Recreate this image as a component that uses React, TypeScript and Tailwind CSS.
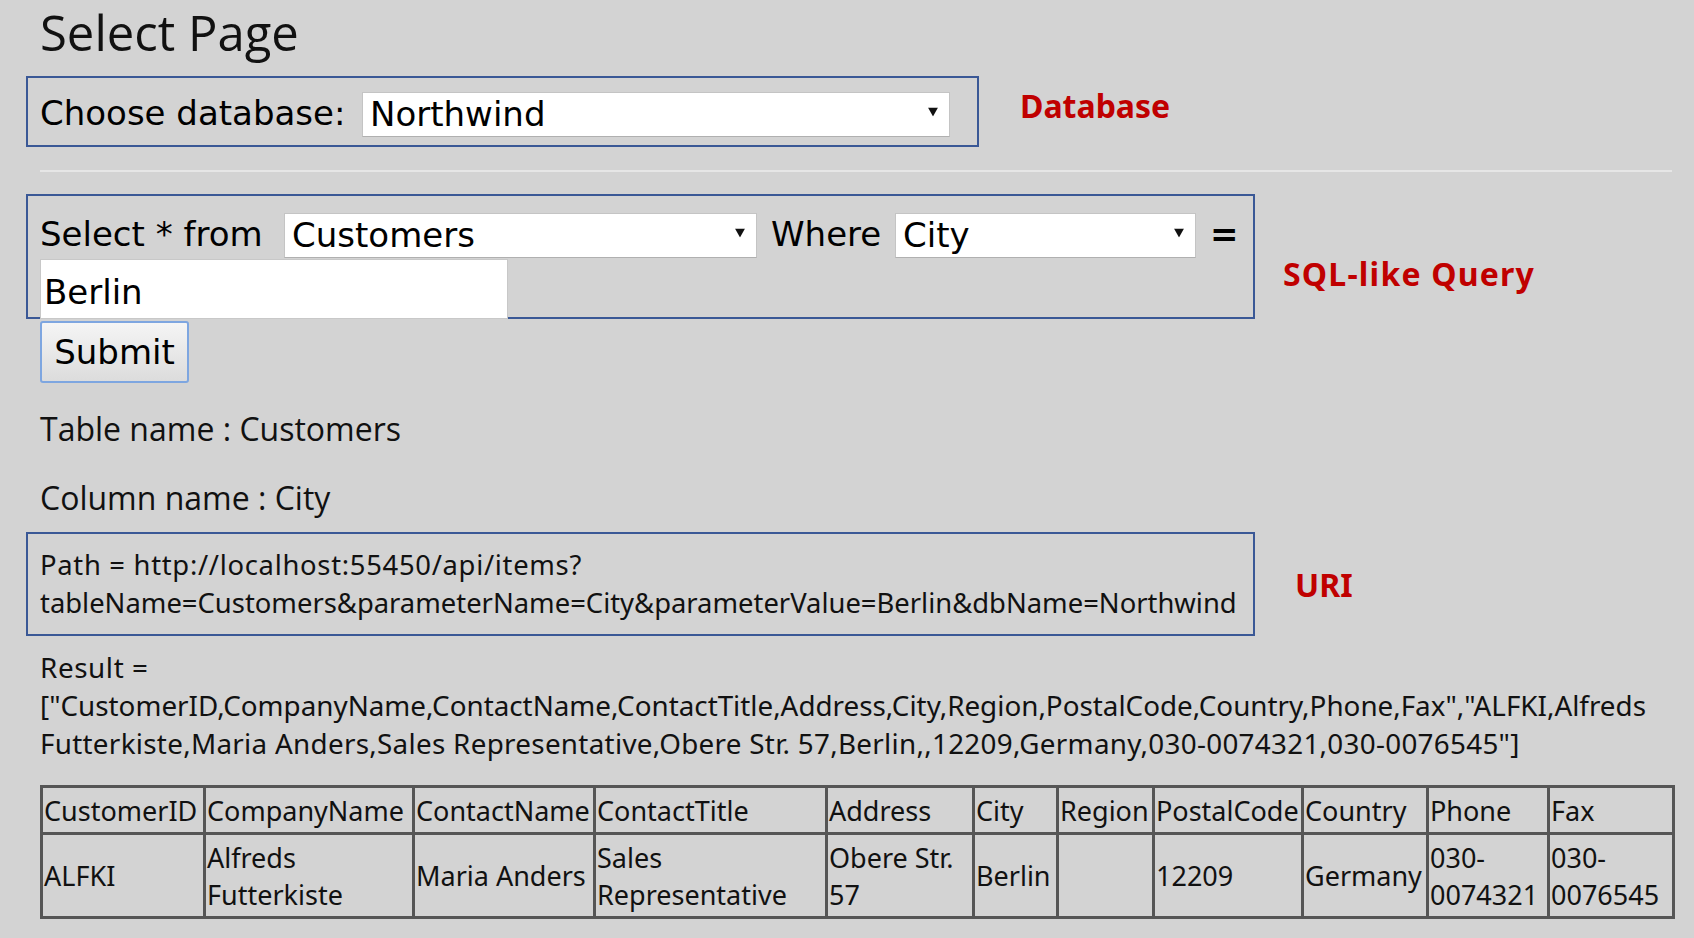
import React from "react";

const BOX = "border-2 border-[#3a5896]";
const RED = "font-['Noto_Sans',sans-serif] font-bold leading-[40px] text-[#c00000] whitespace-nowrap";

function Arrow() {
  return (
    <svg
      width="10"
      height="9"
      viewBox="0 0 10 9"
      className="pointer-events-none absolute right-[12px] top-1/2 -translate-y-1/2"
    >
      <path d="M0 0H10L5 9Z" fill="#111" />
    </svg>
  );
}

function Dropdown({ value, width }: { value: string; width: string }) {
  return (
    <div className={`relative h-[45px] shrink-0 ${width}`}>
      <select
        defaultValue={value}
        className="h-full w-full appearance-none rounded-none border border-[#c4c4c4] border-b-[#b0b0b0] bg-white pl-[7px] pr-[30px] font-['DejaVu_Sans',Verdana,sans-serif] text-[34px] leading-[43px] text-black outline-none"
      >
        <option>{value}</option>
      </select>
      <Arrow />
    </div>
  );
}

const cols = [163, 209, 181, 232, 147, 84, 96, 149, 125, 121, 125];
const header = [
  "CustomerID",
  "CompanyName",
  "ContactName",
  "ContactTitle",
  "Address",
  "City",
  "Region",
  "PostalCode",
  "Country",
  "Phone",
  "Fax",
];
const row = [
  "ALFKI",
  "Alfreds Futterkiste",
  "Maria Anders",
  "Sales Representative",
  "Obere Str. 57",
  "Berlin",
  "",
  "12209",
  "Germany",
  "030-0074321",
  "030-0076545",
];

export default function App() {
  return (
    <div className="min-h-[938px] w-full overflow-hidden bg-[#d3d3d3] text-black">
      <div className="pl-[40px] pr-[22px]">
        <h1 className="pt-[8px] font-['Open_Sans',sans-serif] text-[49px] font-normal leading-[49px] text-[#111]">
          Select Page
        </h1>

        {/* Database */}
        <div className="-ml-[14px] mt-[19px] flex items-start">
          <div
            className={`${BOX} flex h-[71px] w-[953px] shrink-0 items-center pl-[12px] font-['DejaVu_Sans',Verdana,sans-serif] text-[34px]`}
          >
            <span className="w-[322px] shrink-0 translate-y-[2px] whitespace-nowrap">Choose database:</span>
            <Dropdown value="Northwind" width="w-[588px]" />
          </div>
          <span className={`${RED} ml-[41px] mt-[10px] text-[32px]`}>Database</span>
        </div>

        <div className="mt-[23px] h-[2px] bg-[#e6e6e6]" />

        {/* Query */}
        <div className="-ml-[14px] mt-[22px] flex items-start">
          <div
            className={`${BOX} h-[125px] w-[1229px] shrink-0 pl-[12px] pt-[14px] font-['DejaVu_Sans',Verdana,sans-serif] text-[34px]`}
          >
            <div className="flex h-[45px] items-center whitespace-nowrap">
              <span className="w-[244px] shrink-0 translate-y-[2px]">Select * from</span>
              <Dropdown value="Customers" width="w-[473px]" />
              <span className="ml-[14px] w-[124px] shrink-0 translate-y-[2px]">Where</span>
              <Dropdown value="City" width="w-[301px]" />
              <span className="ml-[14px] translate-y-[2px] font-bold">=</span>
            </div>
            <input
              readOnly
              value="Berlin"
              className="mt-[4px] block h-[60px] w-[468px] border border-[#c8c8c8] bg-white pl-[3px] pt-[6px] font-['DejaVu_Sans',Verdana,sans-serif] text-[34px] text-black outline-none"
            />
          </div>
          <span className={`${RED} ml-[28px] mt-[60px] text-[32px] tracking-[1.2px]`}>SQL-like Query</span>
        </div>

        <button className="mt-[2px] block h-[62px] w-[149px] rounded-[3px] border-2 border-[#7ea6e0] bg-gradient-to-b from-[#f5f5f5] to-[#dcdcdc] font-['DejaVu_Sans',Verdana,sans-serif] text-[34px] leading-[40px] text-black">
          Submit
        </button>

        <p className="mt-[24px] h-[44px] font-['Open_Sans',sans-serif] text-[32px] leading-[44px] text-[#111]">
          Table name : Customers
        </p>
        <p className="mt-[25px] h-[44px] font-['Open_Sans',sans-serif] text-[32px] leading-[44px] text-[#111]">
          Column name : City
        </p>

        {/* URI */}
        <div className="-ml-[14px] mt-[12px] flex items-start">
          <div
            className={`${BOX} h-[104px] w-[1229px] shrink-0 whitespace-nowrap pl-[12px] pt-[12px] font-['Noto_Sans',sans-serif] text-[27.4px] leading-[38px] text-[#111]`}
          >
            <div className="tracking-[0.7px]">Path = http://localhost:55450/api/items?</div>
            <div>tableName=Customers&amp;parameterName=City&amp;parameterValue=Berlin&amp;dbName=Northwind</div>
          </div>
          <span className={`${RED} ml-[40px] mt-[33px] text-[32px]`}>URI</span>
        </div>

        {/* Result */}
        <div className="mt-[12px] whitespace-nowrap font-['Noto_Sans',sans-serif] text-[27.8px] leading-[38px] text-[#111]">
          <div className="tracking-[0.6px]">Result =</div>
          <div>
            ["CustomerID,CompanyName,ContactName,ContactTitle,Address,City,Region,PostalCode,Country,Phone,Fax","ALFKI,Alfreds
          </div>
          <div className="tracking-[0.3px]">
            Futterkiste,Maria Anders,Sales Representative,Obere Str. 57,Berlin,,12209,Germany,030-0074321,030-0076545"]
          </div>
        </div>

        <table className="mt-[23px] w-[1632px] table-fixed border-collapse border-[3px] border-[#5a5a5a] font-['Noto_Sans',sans-serif] text-[27px] leading-[37px] text-[#111]">
          <colgroup>
            {cols.map((w, i) => (
              <col key={i} style={{ width: w }} />
            ))}
          </colgroup>
          <tbody>
            <tr className="h-[47px]">
              {header.map((h) => (
                <td key={h} className="border-[3px] border-[#555555] px-[1px] py-0 text-left align-middle">
                  {h}
                </td>
              ))}
            </tr>
            <tr className="h-[84px]">
              {row.map((c, i) => (
                <td key={i} className="border-[3px] border-[#555555] px-[1px] py-0 text-left align-middle">
                  {c}
                </td>
              ))}
            </tr>
          </tbody>
        </table>
      </div>
    </div>
  );
}
